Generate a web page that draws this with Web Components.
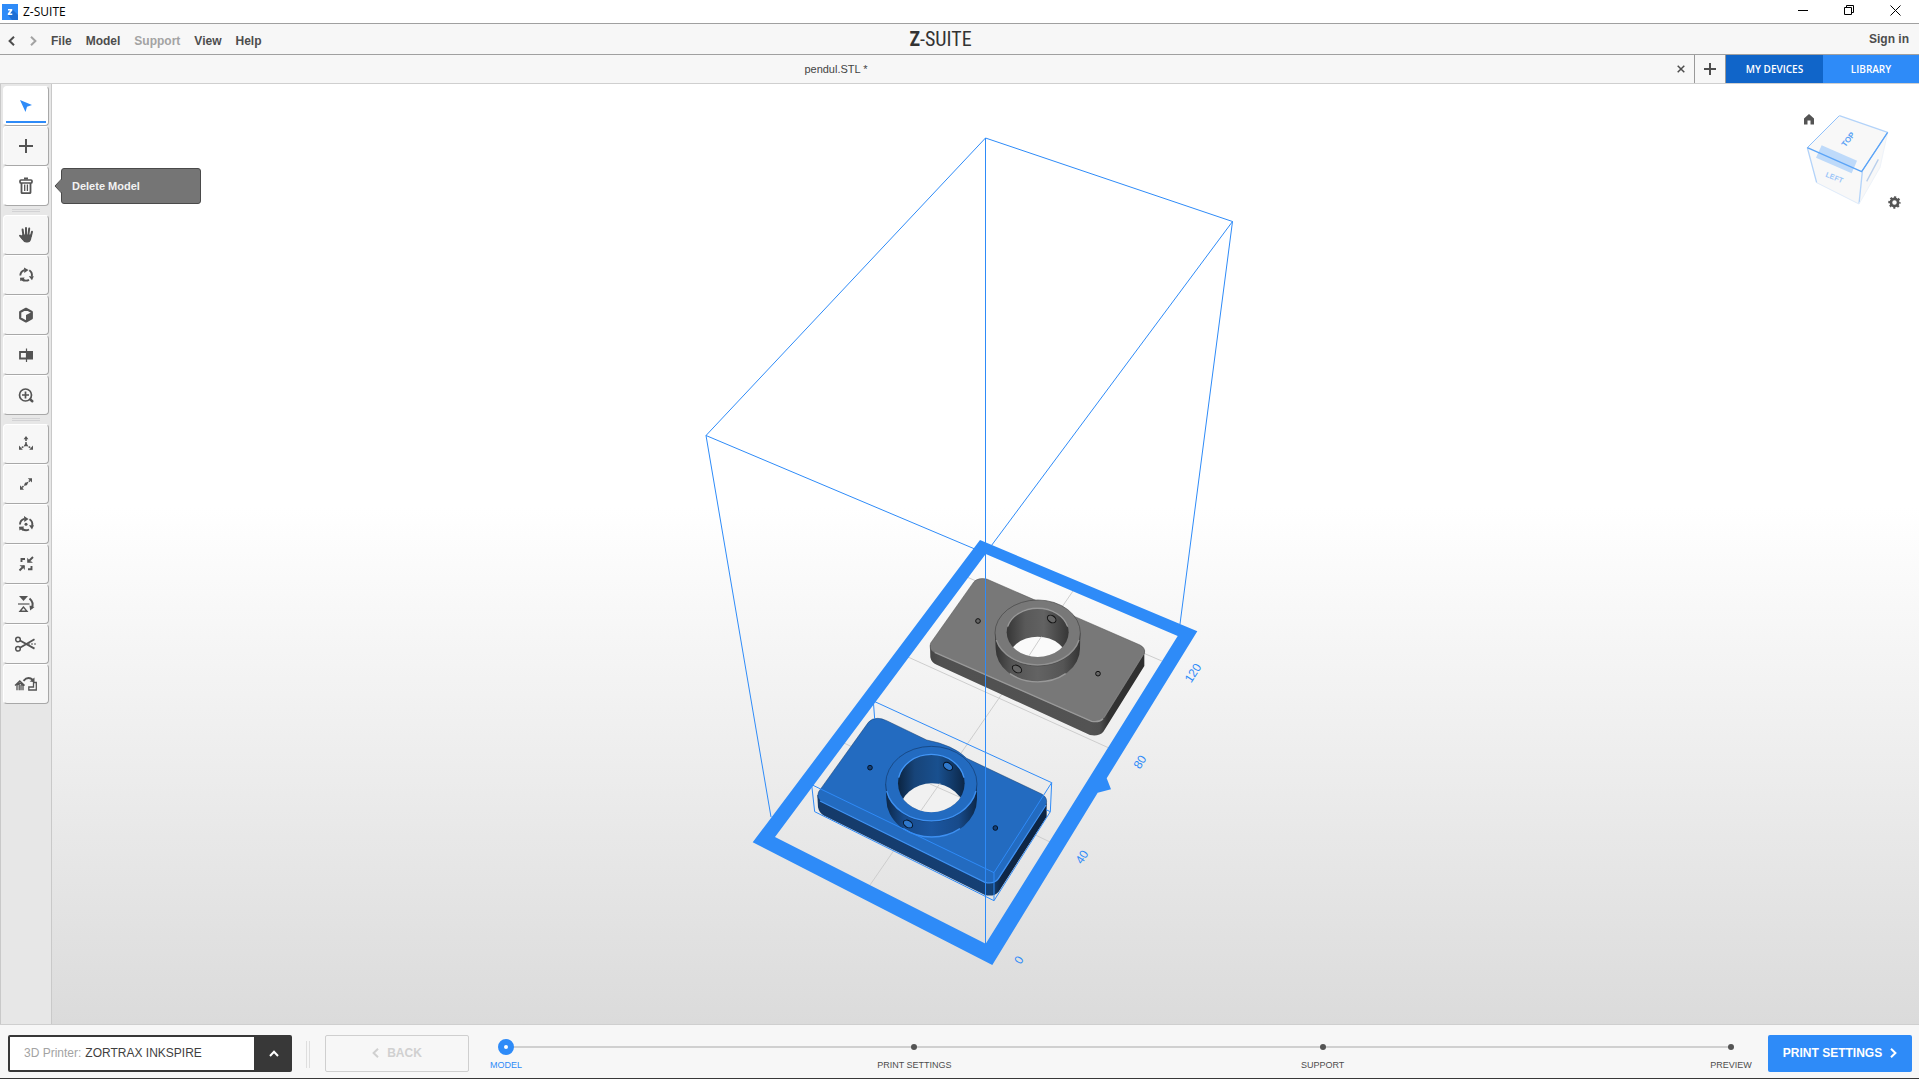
<!DOCTYPE html>
<html lang="en">
<head>
<meta charset="utf-8">
<title>Z-SUITE</title>
<style>
  html, body { height: 100%; margin: 0; }
  body {
    font: 12px/16px "Liberation Sans", Arial, sans-serif;
    color: #4d4d4d;
    background: #f7f7f7;
    --blue: #2e8bf8;
    --panel: #f7f7f7;
    --dark: #383838;
    --line: #cfcfcf;
  }
</style>
</head>
<body>
<zs-app></zs-app>

<script>
const define = (name, html, setup) => {
  const template = document.createElement('template');
  template.innerHTML = html;
  customElements.define(name, class extends HTMLElement {
    constructor() {
      super();
      this.attachShadow({ mode: 'open' }).append(template.content.cloneNode(true));
    }
    connectedCallback() { if (setup) setup(this, this.shadowRoot); }
  });
};

const reset = `
  * { box-sizing: border-box; }
  button { font: inherit; color: inherit; background: none; border: 0; padding: 0; margin: 0; display: flex; align-items: center; justify-content: center; }
  svg { display: block; }
`;

/* Window title bar */
define('zs-titlebar', `
<style>${reset}
  :host { display: flex; align-items: center; height: 24px; background: #fff; border-bottom: 1px solid #a0a0a0; color: #000; font-family: "Open Sans", "Noto Sans", sans-serif; padding: 0 1px 0 2px; box-sizing: border-box; }
  .name { flex: 1; margin-left: 5px; }
  .controls { display: flex; }
  .controls button { width: 46px; height: 22px; padding-bottom: 2px; }
</style>
<svg width="16" height="16" viewBox="0 0 16 16"><path fill="#2e8bf8" d="M0 0h16v16H0z"/><path fill="#1f6fd4" d="M10 5l6 6v5H10l-4-5z"/><path fill="#fff" d="M6 5h4.300v1.600L8 9.500h2.300V11H5.800V9.400L8.200 6.500H6z"/></svg>
<span class="name">Z-SUITE</span>
<div class="controls">
  <button aria-label="Minimize"><svg width="11" height="11" viewBox="0 0 11 11"><path stroke="#000" d="M0 5.500h10"/></svg></button>
  <button aria-label="Restore"><svg width="11" height="11" viewBox="0 0 11 11"><path fill="none" stroke="#000" d="M.5 2.500h7v7h-7zM2.500 2.500v-2h7v7h-2"/></svg></button>
  <button aria-label="Close"><svg width="11" height="11" viewBox="0 0 11 11"><path stroke="#000" d="M.5.5l10 10M10.500.5l-10 10"/></svg></button>
</div>`);

/* Menu bar */
define('zs-menubar', `
<style>${reset}
  :host { display: grid; grid-template-columns: 1fr auto 1fr; align-items: center; height: 31px; background: var(--panel); border-bottom: 1px solid #a0a0a0; font-weight: bold; box-sizing: border-box; }
  nav { display: flex; align-items: center; padding: 3px 0 0 8px; }
  nav button { padding: 0 7px; }
  nav .step { padding: 0; width: 7px; margin-right: 15px; }
  nav .step + .step { margin-right: 7px; }
  .off { color: #a3a3a3; }
  .logo { margin-right: 38px; font: 20px/24px "Liberation Sans Narrow", "Roboto Condensed", "Liberation Sans", sans-serif; color: #333; }
  .sign { justify-self: end; padding-right: 10px; padding-bottom: 1px; }
</style>
<nav>
  <button class="step" aria-label="Previous"><svg width="7" height="10" viewBox="0 0 7 10"><path fill="none" stroke="#4d4d4d" stroke-width="2" d="M6 .8L1.600 5 6 9.200"/></svg></button>
  <button class="step" aria-label="Next"><svg width="7" height="10" viewBox="0 0 7 10"><path fill="none" stroke="#a3a3a3" stroke-width="2" d="M1 .8L5.400 5 1 9.200"/></svg></button>
  <button>File</button><button>Model</button><button class="off">Support</button><button>View</button><button>Help</button>
</nav>
<div class="logo"><b>Z</b>-SUITE</div>
<button class="sign">Sign in</button>`);

/* Document tabs and side panels */
define('zs-tabs', `
<style>${reset}
  :host { display: flex; height: 29px; background: var(--panel); border-bottom: 1px solid var(--line); box-sizing: border-box; font-size: 11px; }
  .doc { flex: 1; display: flex; align-items: center; border-right: 1px solid #999; }
  .doc .title { flex: 1; height: 100%; color: #444; }
  .doc .close { width: 22px; height: 100%; padding-right: 4px; }
  .add { width: 31px; border-right: 1px solid #999; }
  .panel { width: 96px; font: 600 10px/14px "Open Sans", "Noto Sans", sans-serif; color: #fff; background: var(--blue); }
  .devices { width: 97px; background: #1065c9; }
</style>
<div class="doc"><button class="title">pendul.STL *</button><button class="close" aria-label="Close file"><svg width="8" height="8" viewBox="0 0 8 8"><path stroke="#4d4d4d" stroke-width="1.500" d="M.7.7l6.600 6.600M7.300.7L.7 7.300"/></svg></button></div>
<button class="add" aria-label="New file"><svg width="12" height="12" viewBox="0 0 12 12"><path stroke="#4d4d4d" stroke-width="2" d="M6 0v12M0 6h12"/></svg></button>
<button class="panel devices">MY DEVICES</button>
<button class="panel">LIBRARY</button>`);

/* One tool; its icon is slotted */
define('zs-tool', `
<style>${reset}
  :host { display: block; position: relative; color: #545454; }
  button { width: 46px; height: 40px; padding-bottom: 1px; background: var(--panel); border: 1px solid #fff; border-right-color: #a8a8a8; border-bottom-color: #a8a8a8; border-radius: 4px; }
  :host([active]) { color: var(--blue); }
  :host([active]) button, :host([hover]) button { background: #fff; }
  :host([active]) button { background: linear-gradient(var(--blue), var(--blue)) center bottom 2px / 40px 2px no-repeat #fff; }
  ::slotted(svg) { display: block; width: 24px; height: 24px; }
  ::slotted(zs-tooltip) { position: absolute; left: 58px; top: 2px; z-index: 2; }
</style>
<button><slot></slot></button><slot name="tip"></slot>`,
  (host, root) => root.querySelector('button').setAttribute('aria-label', host.getAttribute('label')));

define('zs-tooltip', `
<style>
  :host { display: block; box-sizing: border-box; width: 140px; padding: 9px 10px; font-weight: bold; font-size: 11px; line-height: 16px; color: #f2f2f2; background: #757575; border: 1px solid #4a4a4a; border-radius: 3px; }
  svg { position: absolute; left: -8px; top: 9px; }
</style>
<svg width="8" height="16" viewBox="0 0 8 16"><path fill="#757575" d="M8 1L1 8l7 7z"/><path fill="none" stroke="#4a4a4a" d="M7.500 1L1 8l6.500 7"/></svg>
<slot></slot>`);

/* Left tool column */
define('zs-toolbar', `
<style>${reset}
  :host { display: block; flex: none; width: 52px; padding: 2px; background: #e7e7e7; border: solid #c9c9c9; border-width: 0 1px; box-sizing: border-box; }
  hr { height: 3px; width: 28px; margin: 3px auto; border: solid #d2d2d4; border-width: 1px 0; }
</style>
<zs-tool active label="Select"><svg viewBox="0 0 24 24"><path fill="currentColor" d="M6 6l12 5-5 1.800L11.500 18z"/></svg></zs-tool>
<zs-tool label="Add model"><svg viewBox="0 0 24 24"><path stroke="currentColor" stroke-width="2" d="M12 5v14M5 12h14"/></svg></zs-tool>
<zs-tool hover label="Delete model"><svg viewBox="0 0 24 24" fill="none" stroke="currentColor"><path stroke-width="2" d="M10 4.500h4"/><rect x="6" y="6" width="12" height="3" rx="1" stroke-width="1.700"/><path stroke-width="1.800" d="M7.500 9v9.500q0 .7.7.7h7.600q.7 0 .7-.7V9"/><path stroke-width="1.300" d="M10.700 10.500v6.500M13.400 10.500v6.500"/></svg><zs-tooltip slot="tip">Delete Model</zs-tooltip></zs-tool>
<hr>
<zs-tool label="Pan"><svg viewBox="0 0 24 24"><g fill="none" stroke="currentColor" stroke-width="2" stroke-linecap="round"><path d="M9.500 13L8.600 6.500M12 12V5M14.400 12l.8-6.400M16.800 13.500l1.200-4.800M9 16L6 12.700"/></g><path fill="currentColor" d="M8.500 11.500h9.300l-.6 4.500q-.8 3.500-3.800 3.500h-1.200q-2.200 0-3.700-2.500L6 13.500z"/></svg></zs-tool>
<zs-tool label="Orbit"><svg viewBox="0 0 24 24"><g fill="none" stroke="currentColor" stroke-width="1.900"><path d="M6.300 12.500a6 6 0 0 1 4-5.300M15.300 7.300a6 6 0 0 1 2.500 6.200M15 16.800a6 6 0 0 1-6.200-.2"/></g><path fill="currentColor" d="M10 4.500l4.500 2.600-4.200 3zM14.800 13.200h5l-1.800 4zM6 14.800l4.600-.3-.7 1.600 1.400 1.500-2 1-1.500-1.100L6.300 18z"/></svg></zs-tool>
<zs-tool label="View mode"><svg viewBox="0 0 24 24"><path fill="none" stroke="currentColor" stroke-width="2.200" stroke-linejoin="round" d="M12 5.800l5.800 3.200v6.300L12 18.500l-5.800-3.200V9z"/><path fill="currentColor" d="M12 12l6-3v6.500l-6 3z"/></svg></zs-tool>
<zs-tool label="Split view"><svg viewBox="0 0 24 24"><path fill="currentColor" d="M12 8h7v8.500h-7z"/><path fill="none" stroke="currentColor" stroke-width="1.800" d="M12 9H6v6.500h6"/><path stroke="currentColor" stroke-width="1.200" d="M12.500 5.500v13.500"/></svg></zs-tool>
<zs-tool label="Zoom"><svg viewBox="0 0 24 24" fill="none" stroke="currentColor"><circle cx="11.500" cy="12" r="6" stroke-width="1.700"/><path stroke-width="1.700" d="M11.500 8.500v7M8 12h7"/><path stroke-width="2.500" stroke-linecap="round" d="M16.300 16.500l2 1.700"/></svg></zs-tool>
<hr>
<zs-tool label="Move"><svg viewBox="0 0 24 24"><g stroke="currentColor" stroke-width="1.500" stroke-dasharray="2 1"><path d="M12 12V7M12 13l-5 3M12 13l5 3"/></g><path fill="currentColor" d="M12 4l2.400 3.300H9.600zM5 17.800V13.500l3.800 4.300zM19 17.800V13.500l-3.800 4.300z"/><circle cx="12" cy="12.700" r="1.300" fill="currentColor"/></svg></zs-tool>
<zs-tool label="Scale"><svg viewBox="0 0 24 24"><path stroke="currentColor" stroke-width="1.500" stroke-dasharray="2 1" d="M8 15.500l8-7"/><path fill="currentColor" d="M18 6.200V10.600L13.800 6.200zM6 17.700v-4.400l4 4.400z"/><circle cx="12" cy="12" r="1.400" fill="currentColor"/></svg></zs-tool>
<zs-tool label="Rotate"><svg viewBox="0 0 24 24"><g fill="none" stroke="currentColor" stroke-width="1.900"><path d="M6 12.500a6 6 0 0 1 4.200-5.600M15.500 7.200a6 6 0 0 1 2.600 6.500M15 17.500a6 6 0 0 1-6.500-.5"/></g><circle cx="12" cy="12.300" r="1.500" fill="currentColor"/><path fill="currentColor" d="M10 4l4.500 2.900-4.200 3zM15 13.200h5l-2 4.200zM5 14.800l5-.3-.7 1.800 1.400 1.500-2.200 1-1.500-1.300-1.500.9z"/></svg></zs-tool>
<zs-tool label="Fit"><svg viewBox="0 0 24 24"><g fill="none" stroke="currentColor" stroke-width="1.900"><path d="M7.500 10V7H11M17.500 14v3.200H14M19 5l-4.500 4.500M5.500 18.500L10 14"/></g><path fill="currentColor" d="M13.200 5.800v5H19L17 9.200h-2V7.800zM10.800 18v-4.800H5.500l1.800 1.600h1.900V16z"/></svg></zs-tool>
<zs-tool label="Mirror"><svg viewBox="0 0 24 24"><path fill="currentColor" d="M5 4h9L9.500 9z"/><path stroke="currentColor" stroke-width="1.200" d="M4 12h11.500"/><path fill="none" stroke="currentColor" stroke-width="1.400" d="M9.500 15L6 19.300h7z"/><path fill="none" stroke="currentColor" stroke-width="1.900" d="M15.500 6.500q5.200 4.500 2 9.500"/><path fill="currentColor" d="M15.500 13.500l5 1.500-4.400 3.500z"/></svg></zs-tool>
<zs-tool label="Split"><svg viewBox="0 0 24 24" fill="none" stroke="currentColor"><g stroke-width="1.500"><circle cx="4" cy="7.500" r="2.300"/><circle cx="4" cy="16.800" r="2.300"/></g><path stroke-width="1.900" d="M6 8.500l14.500 8.200M6 15.800l14.500-8.600"/><path stroke-width="1.200" stroke-dasharray="2 1" d="M14 12h9"/></svg></zs-tool>
<zs-tool label="Auto-place"><svg viewBox="0 0 24 24" fill="none" stroke="currentColor"><path stroke-width="1.300" d="M1 13.500l4.800-4.500 4.800 4.500M3 13v5.300M5.200 11v7.300M7 11v7.300M9 13v5.300M2.500 13.500l3.300-2.500L9 13.500"/><path stroke-width="1.900" d="M9.500 8.800q4.500-5 9.500-.8"/><path fill="currentColor" stroke="none" d="M20.500 5.500v4.800l-4.800-.8z"/><path stroke-width="1.300" d="M19.500 10.500h2.800V18h-7.500v-3h4.700z"/></svg></zs-tool>`);

/* Orientation cube */
define('zs-viewcube', `
<style>${reset}
  :host { display: block; width: 119px; height: 136px; }
  .home { position: absolute; left: 4px; top: 30px; }
  .gear { position: absolute; left: 88px; top: 112px; }
  text { font: bold 24px "Liberation Sans", Arial, sans-serif; fill: #5ba2f5; text-anchor: middle; }
  .side { font-size: 22px; fill: #9cc6f8; }
</style>
<svg width="119" height="136" viewBox="540 252 357 408">
  <path fill="#f8f8f8" d="M658 347L803 397 780 502 717 612 590 548 562 443z"/>
  <path fill="#b7d6fa" fill-opacity=".9" d="M605 436l106 46-16 38-107-47z"/>
  <g fill="none" stroke-linejoin="round"><path stroke="#8fc0fa" stroke-width="3" d="M562 443l96-96M725 515l78-118"/><path stroke="#b3d3f9" stroke-width="4" d="M658 347l145 50M562 443l28 105M727 515l-10 97"/><path stroke="#dfebfa" stroke-width="3" d="M590 548l127 64"/><path stroke="#eef3f9" stroke-width="3" d="M803 397l-23 105-63 110"/><path stroke="#5ba4f7" stroke-width="4" d="M562 443l163 72 78-118"/></g>
  <path stroke="#b9cfec" stroke-width="4" d="M740 544l35-66"/>
  <text transform="translate(684 418) rotate(-52)" y="9">TOP</text>
  <text class="side" transform="translate(643 533) rotate(22)" y="7">LEFT</text>
</svg>
<button class="home" aria-label="Home view"><svg width="10" height="11" viewBox="0 0 10 11"><path fill="#545454" d="M5 0l5 4.500V10.500H6.500V6.500h-3v4H0v-6z"/></svg></button>
<button class="gear" aria-label="View settings"><svg width="13" height="13" viewBox="0 0 13 13"><circle cx="6.500" cy="6.500" r="3.600" fill="none" stroke="#545454" stroke-width="2.700"/><circle cx="6.500" cy="6.500" r="5.200" fill="none" stroke="#545454" stroke-width="2" stroke-dasharray="2.040 2.040" stroke-dashoffset="1"/></svg></button>`);

/* 3D viewport */
define('zs-scene', `
<style>${reset}
  :host { display: block; position: relative; flex: 1; min-width: 0; background: linear-gradient(#fff 45%, #dbdbdb); overflow: hidden; }
  .world { position: absolute; inset: 0; width: 100%; height: 100%; }
  zs-viewcube { position: absolute; top: 0; right: 0; }
  .labels text { font: 12px "Liberation Sans", Arial, sans-serif; fill: #2e8bf8; text-anchor: middle; }
</style>
<svg class="world" viewBox="52 84 1867 940">
  <defs>
    <linearGradient id="bw"><stop offset="0" stop-color="#0c2748"/><stop offset=".2" stop-color="#174a8a"/><stop offset=".5" stop-color="#1b56a0"/><stop offset=".8" stop-color="#174a8a"/><stop offset="1" stop-color="#0c2748"/></linearGradient>
    <linearGradient id="bi"><stop offset="0" stop-color="#0b2441"/><stop offset=".25" stop-color="#174479"/><stop offset=".6" stop-color="#19508f"/><stop offset="1" stop-color="#0c2748"/></linearGradient>
    <linearGradient id="gw"><stop offset="0" stop-color="#333"/><stop offset=".2" stop-color="#555"/><stop offset=".5" stop-color="#636363"/><stop offset=".8" stop-color="#555"/><stop offset="1" stop-color="#333"/></linearGradient>
    <linearGradient id="gi"><stop offset="0" stop-color="#363636"/><stop offset=".3" stop-color="#595959"/><stop offset=".6" stop-color="#626262"/><stop offset="1" stop-color="#363636"/></linearGradient>
    <linearGradient id="bs"><stop offset="0" stop-color="#153a69"/><stop offset=".71" stop-color="#153f74"/><stop offset=".76" stop-color="#164377"/><stop offset=".8" stop-color="#0e2747"/><stop offset="1" stop-color="#0d2543"/></linearGradient>
    <linearGradient id="gs"><stop offset="0" stop-color="#454545"/><stop offset=".05" stop-color="#505050"/><stop offset=".74" stop-color="#535353"/><stop offset=".79" stop-color="#505050"/><stop offset=".83" stop-color="#333"/><stop offset="1" stop-color="#2f2f2f"/></linearGradient>
    <clipPath id="bh"><ellipse cx="574" cy="280" rx="100" ry="87"/></clipPath>
    <clipPath id="gh"><ellipse cx="413" cy="337" rx="93" ry="74"/></clipPath>
  </defs>

  <g stroke="#cdcdcd" fill="none"><path d="M968 577.500L1163 661.500M908 657L1109 748M844 743L1050 842M1073 591L870 885"/></g>

  <g fill="none" stroke="#2e8bf8"><path d="M985.500 138L1232.500 221.500 985.500 553.500 706 435.500zM706 435.500L771 817M1232.500 221.500L1180 624"/></g>
  <path fill="#2e8bf8" fill-rule="evenodd" d="M980 540L1197.300 631.300 1106.700 778.300 1111 789.300 1097.700 792.700 992.300 965 752.700 842.300zM985.700 554L775 837 985.700 943.700 1177.700 636z"/>

  <g transform="translate(900 520) scale(.33333)">
    <path fill="url(#gs)" d="M90 375L91 412Q94 428 110 434L570 645Q597 650 610 635L733 438V390L600 500 300 400z"/>
    <path fill="#787878" stroke="#4a4a4a" stroke-width="1.500" d="M92 369L222 185Q235 172 260 177L400 238 525 290 720 375Q738 385 733 400L612 595Q600 608 575 605L100 396Q86 388 92 369z"/>
    <path fill="none" stroke="#9a9a9a" stroke-width="4" d="M104 397L575 604Q597 608 609 596"/><path fill="none" stroke="#8c8c8c" stroke-width="2" d="M612 593L731 402"/>
    <path fill="url(#gw)" d="M285 339L287 386A126.500 100 0 0 0 540 386L541 339z"/><path fill="none" stroke="#999" stroke-width="4" d="M330 461A127 100 0 0 0 497 461"/>
    <ellipse cx="413" cy="339" rx="128" ry="99" fill="#787878" stroke="#444" stroke-width="2"/>
    <path fill="none" stroke="#929292" stroke-width="4" d="M289 360A128 99 0 0 0 537 360"/>
    <ellipse cx="413" cy="337" rx="93" ry="74" fill="url(#gi)"/>
    <g clip-path="url(#gh)"><ellipse cx="413" cy="424" rx="91" ry="74" fill="#fafafa"/><path stroke="#cdcdcd" stroke-width="3" d="M424 350L380 418"/></g>
    <path fill="none" stroke="#999" stroke-width="4" d="M323 320A93 74 0 0 1 503 320"/>
    <g fill="#666" stroke="#111" stroke-width="3"><circle cx="234" cy="303" r="7"/><circle cx="594" cy="461" r="7"/><ellipse cx="455" cy="297" rx="14" ry="10" transform="rotate(35 455 297)"/><ellipse cx="351" cy="447" rx="15" ry="10" transform="rotate(32 351 447)"/></g>
  </g>

  <g transform="translate(740 690) scale(.33333)">
    <path fill="url(#bs)" d="M232 315L234 352Q238 369 250 376L735 615Q762 621 776 605L920 380V340L700 450 400 350z"/>
    <path fill="#236bc0" stroke="#123a6b" stroke-width="1.500" d="M236 305L385 97Q395 85 413 85 425 85 440 92L560 150Q640 165 680 205L905 312Q924 323 919 342L775 568Q760 583 735 577L246 336Q228 325 236 305z"/>
    <path fill="none" stroke="#3f92f4" stroke-width="4" d="M240 333L735 577Q763 583 775 566L918 345"/>
    <path fill="url(#bw)" d="M437 282L439 328A136 114 0 0 0 711 328V282z"/><path fill="none" stroke="#3d90f2" stroke-width="4" d="M490 416A136 114 0 0 0 660 416"/>
    <ellipse cx="574" cy="282" rx="137" ry="113" fill="#236bc0" stroke="#123a6b" stroke-width="2"/>
    <path fill="none" stroke="#3d90f2" stroke-width="4" d="M440 303A137 113 0 0 0 708 303"/>
    <ellipse cx="574" cy="280" rx="100" ry="87" fill="url(#bi)"/>
    <g clip-path="url(#bh)"><ellipse cx="576" cy="366" rx="98" ry="86" fill="#f1f1f1"/><path stroke="#cdcdcd" stroke-width="3" d="M600 280L540 366M570 282L665 324"/></g>
    <path fill="none" stroke="#4296f7" stroke-width="4" d="M476 263A100 87 0 0 1 672 263"/>
    <g fill="#123f78" stroke="#061427" stroke-width="3"><circle cx="390" cy="233" r="7"/><circle cx="766" cy="414" r="7"/><g fill="#2f78cc"><ellipse cx="624" cy="229" rx="15" ry="10" transform="rotate(35 624 229)"/><ellipse cx="504" cy="402" rx="15" ry="10" transform="rotate(32 504 402)"/></g></g>
    <path fill="none" stroke="#2e8bf8" stroke-width="3" d="M400 33L935 278 762 548 215 284M400 33L404 87M215 284L224 365 762 632 931 365 935 278M762 548V632M931 365l-13-6"/>
  </g>

  <path stroke="#2e8bf8" d="M985.500 138V944"/>
  <g class="labels">
    <text transform="translate(1019 960) rotate(-57)" y="4">0</text>
    <text transform="translate(1082 857) rotate(-57)" y="4">40</text>
    <text transform="translate(1140 762) rotate(-57)" y="4">80</text>
    <text transform="translate(1193 673) rotate(-57)" y="4">120</text>
  </g>
</svg>
<zs-viewcube></zs-viewcube>`);

/* Printer drop-down */
define('zs-printer', `
<style>${reset}
  :host { display: flex; width: 284px; height: 37px; background: #fff; border: 2px solid var(--dark); border-radius: 2px; box-sizing: border-box; }
  label { padding-left: 14px; color: #a3a3a3; line-height: 32px; }
  select { flex: 1; min-width: 0; appearance: none; border: 0; padding: 0 0 0 4px; margin: 0; background: none; font: inherit; color: #3f3f3f; height: 32px; }
  button { width: 36px; padding-left: 3px; background: var(--dark); }
</style>
<label for="printer">3D Printer:</label>
<select id="printer"><option>ZORTRAX INKSPIRE</option></select>
<button aria-label="Show printers"><svg width="10" height="7" viewBox="0 0 10 7"><path fill="none" stroke="#fff" stroke-width="2" d="M1 6l4-4.200L9 6"/></svg></button>`);

/* A single step of the workflow */
define('zs-step', `
<style>
  :host { display: flex; flex-direction: column; align-items: center; width: 74px; font-size: 9px; line-height: 12px; white-space: nowrap; color: #4d4d4d; }
  i { display: flex; align-items: center; height: 16px; margin-bottom: 4px; }
  i::before { content: ""; width: 6px; height: 6px; border-radius: 50%; background: #545454; }
  :host([current]) { color: var(--blue); }
  :host([current]) i::before { width: 4px; height: 4px; background: #fff; border: 6px solid var(--blue); }
</style>
<i></i><span><slot></slot></span>`);

/* Bottom bar */
define('zs-footer', `
<style>${reset}
  :host { display: flex; height: 55px; padding: 10px 7px 0 8px; background: var(--panel); border: solid; border-color: var(--line) transparent #383838; border-width: 1px 0; box-sizing: border-box; }
  .grip { width: 4px; height: 27px; margin: 6px 15px 0 14px; border: solid #dedede; border-width: 0 1px; }
  .nav { height: 37px; width: 144px; padding-bottom: 2px; border-radius: 2px; font-weight: bold; gap: 8px; }
  .back { border: 1px solid var(--line); color: #d0d0d0; }
  .next { background: var(--blue); color: #fff; }
  .steps { flex: 1; display: flex; justify-content: space-between; align-items: flex-start; padding-top: 4px; background: linear-gradient(#d0d0d0, #d0d0d0) 37px 11px / calc(100% - 74px) 2px no-repeat; }
</style>
<zs-printer></zs-printer>
<span class="grip"></span>
<button class="nav back" disabled><svg width="7" height="10" viewBox="0 0 7 10"><path fill="none" stroke="currentColor" stroke-width="2" d="M6 .8L1.600 5 6 9.200"/></svg>BACK</button>
<div class="steps">
  <zs-step current>MODEL</zs-step><zs-step>PRINT SETTINGS</zs-step><zs-step>SUPPORT</zs-step><zs-step>PREVIEW</zs-step>
</div>
<button class="nav next">PRINT SETTINGS<svg width="7" height="10" viewBox="0 0 7 10"><path fill="none" stroke="currentColor" stroke-width="2" d="M1 .8L5.400 5 1 9.200"/></svg></button>`);

define('zs-app', `
<style>
  :host { display: flex; flex-direction: column; height: 100vh; }
  main { flex: 1; min-height: 0; display: flex; }
</style>
<zs-titlebar></zs-titlebar>
<zs-menubar></zs-menubar>
<zs-tabs></zs-tabs>
<main><zs-toolbar></zs-toolbar><zs-scene></zs-scene></main>
<zs-footer></zs-footer>`);
</script>
</body>
</html>
